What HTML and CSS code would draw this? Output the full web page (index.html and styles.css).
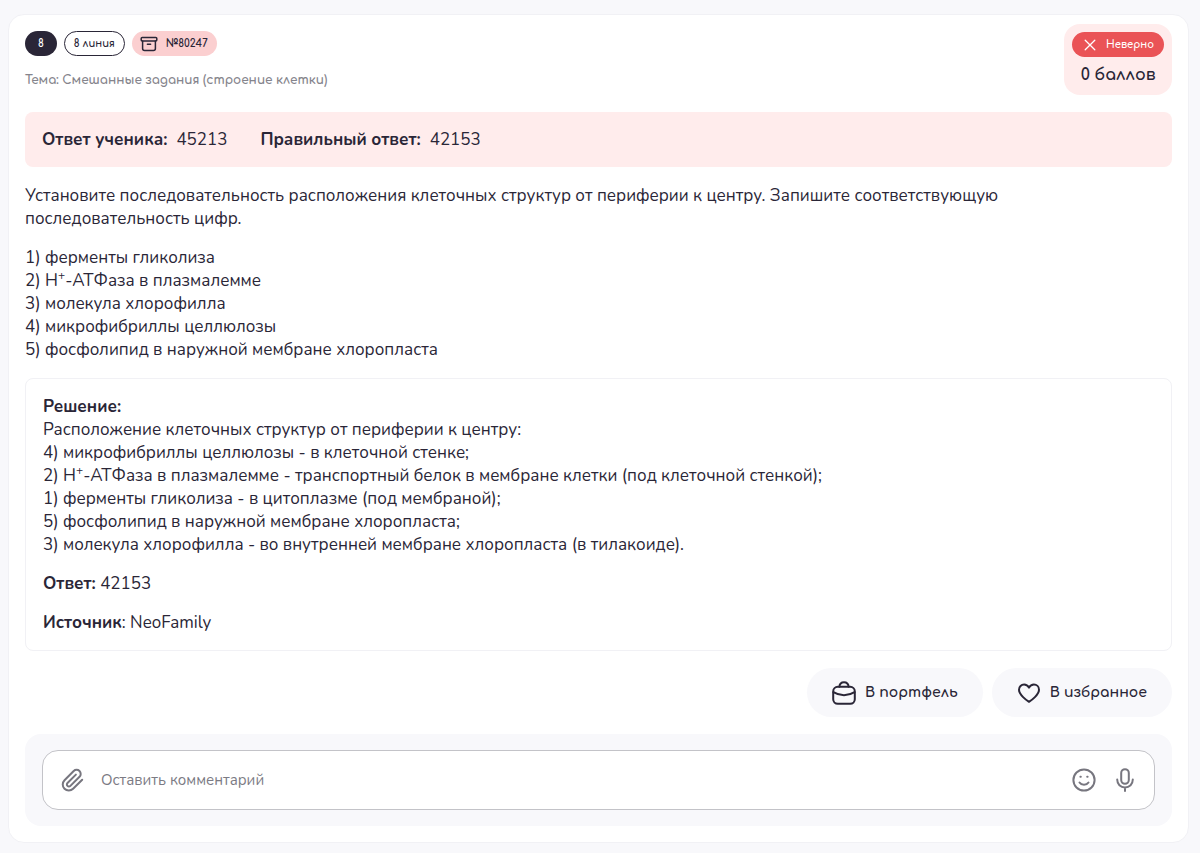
FILE: index.html
```html
<!DOCTYPE html>
<html lang="ru">
<head>
<meta charset="utf-8">
<meta name="viewport" content="width=device-width, initial-scale=1">
<title>Задание №80247</title>
<link rel="stylesheet" href="styles.css">
</head>
<body>
<main class="card">
  <header class="card-header">
    <div class="meta">
      <div class="chips">
        <span class="chip chip-dark">8</span>
        <span class="chip chip-outline">8 линия</span>
        <span class="chip chip-pink">
          <svg class="icon-archive" viewBox="0 0 18 16" aria-hidden="true"><rect x="1.2" y="1.5" width="15.6" height="3.6" rx="1"/><path d="M2.6 5.1v7.4a2 2 0 0 0 2 2h8.8a2 2 0 0 0 2-2V5.1M7.4 8.3h3.2"/></svg>
          №80247
        </span>
      </div>
      <p class="topic">Тема: Смешанные задания (строение клетки)</p>
    </div>
    <div class="score">
      <span class="verdict">
        <svg class="icon-cross" viewBox="0 0 12 12" aria-hidden="true"><path d="M1.2 1.2l9.6 9.6M10.8 1.2l-9.6 9.6"/></svg>
        Неверно
      </span>
      <span class="points">0 баллов</span>
    </div>
  </header>

  <section class="answers">
    <p class="answer"><b>Ответ ученика:</b><span>45213</span></p>
    <p class="answer"><b>Правильный ответ:</b><span>42153</span></p>
  </section>

  <section class="task">
    <p>Установите последовательность расположения клеточных структур от периферии к центру. Запишите соответствующую последовательность цифр.</p>
    <p>1) ферменты гликолиза<br>2) H<sup>+</sup>-АТФаза в плазмалемме<br>3) молекула хлорофилла<br>4) микрофибриллы целлюлозы<br>5) фосфолипид в наружной мембране хлоропласта</p>
  </section>

  <section class="solution">
    <p><b>Решение:</b><br>Расположение клеточных структур от периферии к центру:<br>4) микрофибриллы целлюлозы - в клеточной стенке;<br>2) H<sup>+</sup>-АТФаза в плазмалемме - транспортный белок в мембране клетки (под клеточной стенкой);<br>1) ферменты гликолиза - в цитоплазме (под мембраной);<br>5) фосфолипид в наружной мембране хлоропласта;<br>3) молекула хлорофилла - во внутренней мембране хлоропласта (в тилакоиде).</p>
    <p><b>Ответ:</b> 42153</p>
    <p><b>Источник</b>: NeoFamily</p>
  </section>

  <div class="actions">
    <button class="action" type="button">
      <svg class="icon" viewBox="0 0 24 24" aria-hidden="true"><rect x="1.2" y="5.800" width="21.600" height="17" rx="4.600"/><path d="M7.400 5.800C7.600 2.900 9.200 1.200 12 1.200s4.400 1.700 4.600 4.600M1.400 11.200c3.200 2 6.600 3 10.600 3s7.400-1 10.600-3"/></svg>
      В портфель
    </button>
    <button class="action" type="button">
      <svg class="icon" viewBox="0 0 24 24" aria-hidden="true"><path d="M12 20.800C9.600 19.400 2 13.800 2 8.800 2 5.600 4.400 3.600 7.100 3.600c2 0 3.800 1.100 4.900 3 1.100-1.900 2.900-3 4.900-3 2.700 0 5.100 2 5.100 5.200 0 5-7.600 10.600-10 12z"/></svg>
      В избранное
    </button>
  </div>

  <form class="comment">
    <div class="comment-field">
      <button class="tool" type="button" aria-label="Прикрепить файл">
        <svg class="icon" viewBox="0 0 24 24" aria-hidden="true"><path d="M22.200 11.700l-9.100 9.100a6.100 6.100 0 0 1-8.600 0 6.100 6.100 0 0 1 0-8.600l9.200-9.200a4.100 4.100 0 0 1 5.800 0 4.100 4.100 0 0 1 0 5.800L10.400 17.900a2.050 2.050 0 0 1-2.900 0 2.050 2.050 0 0 1 0-2.900l8.400-8.400"/></svg>
      </button>
      <input class="comment-input" type="text" placeholder="Оставить комментарий" aria-label="Оставить комментарий">
      <button class="tool" type="button" aria-label="Смайлики">
        <svg class="icon" viewBox="0 0 24 24" aria-hidden="true"><circle cx="12" cy="12" r="10.600"/><path d="M7.500 14.500c1 1.500 2.500 2.200 4.500 2.200s3.500-.7 4.500-2.200M8.400 8.700h.4M15.200 8.700h.4"/></svg>
      </button>
      <button class="tool" type="button" aria-label="Голосовое сообщение">
        <svg class="icon" viewBox="0 0 24 24" aria-hidden="true"><rect x="8.200" y="1.200" width="7.600" height="14.600" rx="3.800"/><path d="M4.200 11.600c0 4.600 3.300 7.800 7.800 7.800s7.800-3.200 7.800-7.800M12 19.400v3.600"/></svg>
      </button>
    </div>
  </form>
</main>
</body>
</html>
```
FILE: styles.css
```css
* {
  box-sizing: border-box;
}

body {
  margin: 0;
  padding: 14px 11px 10px 8px;
  background: #f8f8fb;
  color: #2a2637;
  font-family: Nunito, "Noto Sans", sans-serif;
  font-size: 17px;
  line-height: 23px;
}

p {
  margin: 0;
}

button,
input {
  font: inherit;
  color: inherit;
}

svg {
  fill: none;
  stroke: currentColor;
  stroke-linecap: round;
  stroke-linejoin: round;
  flex: none;
}

.card {
  display: flex;
  flex-direction: column;
  gap: 17px;
  padding: 9px 16px 16px;
  background: #fff;
  border: 1px solid #f1f1f5;
  border-radius: 16px;
}

.card-header {
  display: flex;
  justify-content: space-between;
  align-items: flex-start;
}

.meta {
  padding-top: 7px;
}

.chips {
  display: flex;
  gap: 7px;
}

.chip,
.verdict {
  display: flex;
  align-items: center;
  height: 25px;
  border-radius: 13px;
  font-family: Comfortaa, Lato, sans-serif;
  font-size: 10px;
  font-weight: 700;
}

.chip-dark {
  padding: 0 13px;
  background: #2a2637;
  color: #fff;
}

.chip-outline {
  padding: 0 9px;
  border: 1px solid #2a2637;
}

.chip-pink {
  gap: 8px;
  padding: 0 9px 0 8px;
  background: #fbcfd0;
}

.icon-archive {
  width: 18px;
  height: 16px;
  stroke-width: 1.5;
}

.topic {
  margin-top: 13px;
  color: #85848c;
  font-family: Comfortaa, Lato, sans-serif;
  font-size: 12px;
  font-weight: 700;
}

.score {
  display: flex;
  flex-direction: column;
  align-items: center;
  gap: 7px;
  padding: 8px;
  background: #ffecec;
  border-radius: 16px;
}

.verdict {
  gap: 10px;
  padding: 0 10px 0 12px;
  background: #ea5356;
  color: #fff;
}

.icon-cross {
  width: 12px;
  height: 12px;
  stroke-width: 1.3;
}

.points {
  font-family: Comfortaa, Lato, sans-serif;
  font-size: 16px;
  font-weight: 700;
}

.answers {
  display: flex;
  flex-wrap: wrap;
  gap: 8px 33px;
  padding: 16px 17px;
  background: #ffecec;
  border-radius: 8px;
}

.answer {
  display: flex;
  gap: 9px;
}

.task,
.solution {
  display: flex;
  flex-direction: column;
  gap: 16px;
}

.task {
  padding-right: 16px;
}

.solution {
  padding: 16px 17px;
  border: 1px solid #f1f1f5;
  border-radius: 8px;
}

b {
  font-weight: 700;
}

sup {
  font-size: 12px;
  line-height: 0;
}

.actions {
  display: flex;
  justify-content: flex-end;
  gap: 9px;
}

.action {
  display: flex;
  align-items: center;
  gap: 9px;
  height: 49px;
  padding: 0 25px;
  border: 0;
  border-radius: 25px;
  background: #f8f8fb;
  font-family: Comfortaa, Lato, sans-serif;
  font-size: 14px;
  font-weight: 700;
}

.icon {
  display: block;
  width: 24px;
  height: 24px;
  stroke-width: 2;
}

.comment {
  padding: 16px 17px;
  background: #f8f8fb;
  border-radius: 16px;
}

.comment-field {
  display: flex;
  align-items: center;
  gap: 17px;
  height: 60px;
  padding: 0 17px;
  background: #fff;
  border: 1px solid #c3c3c8;
  border-radius: 16px;
}

.comment-input {
  flex: 1;
  min-width: 0;
  padding: 0;
  border: 0;
  background: none;
  font-size: 15px;
}

.comment-input::placeholder {
  color: #7c7b84;
  opacity: 1;
}

.tool {
  padding: 0;
  border: 0;
  background: none;
  color: #77767f;
}
```
